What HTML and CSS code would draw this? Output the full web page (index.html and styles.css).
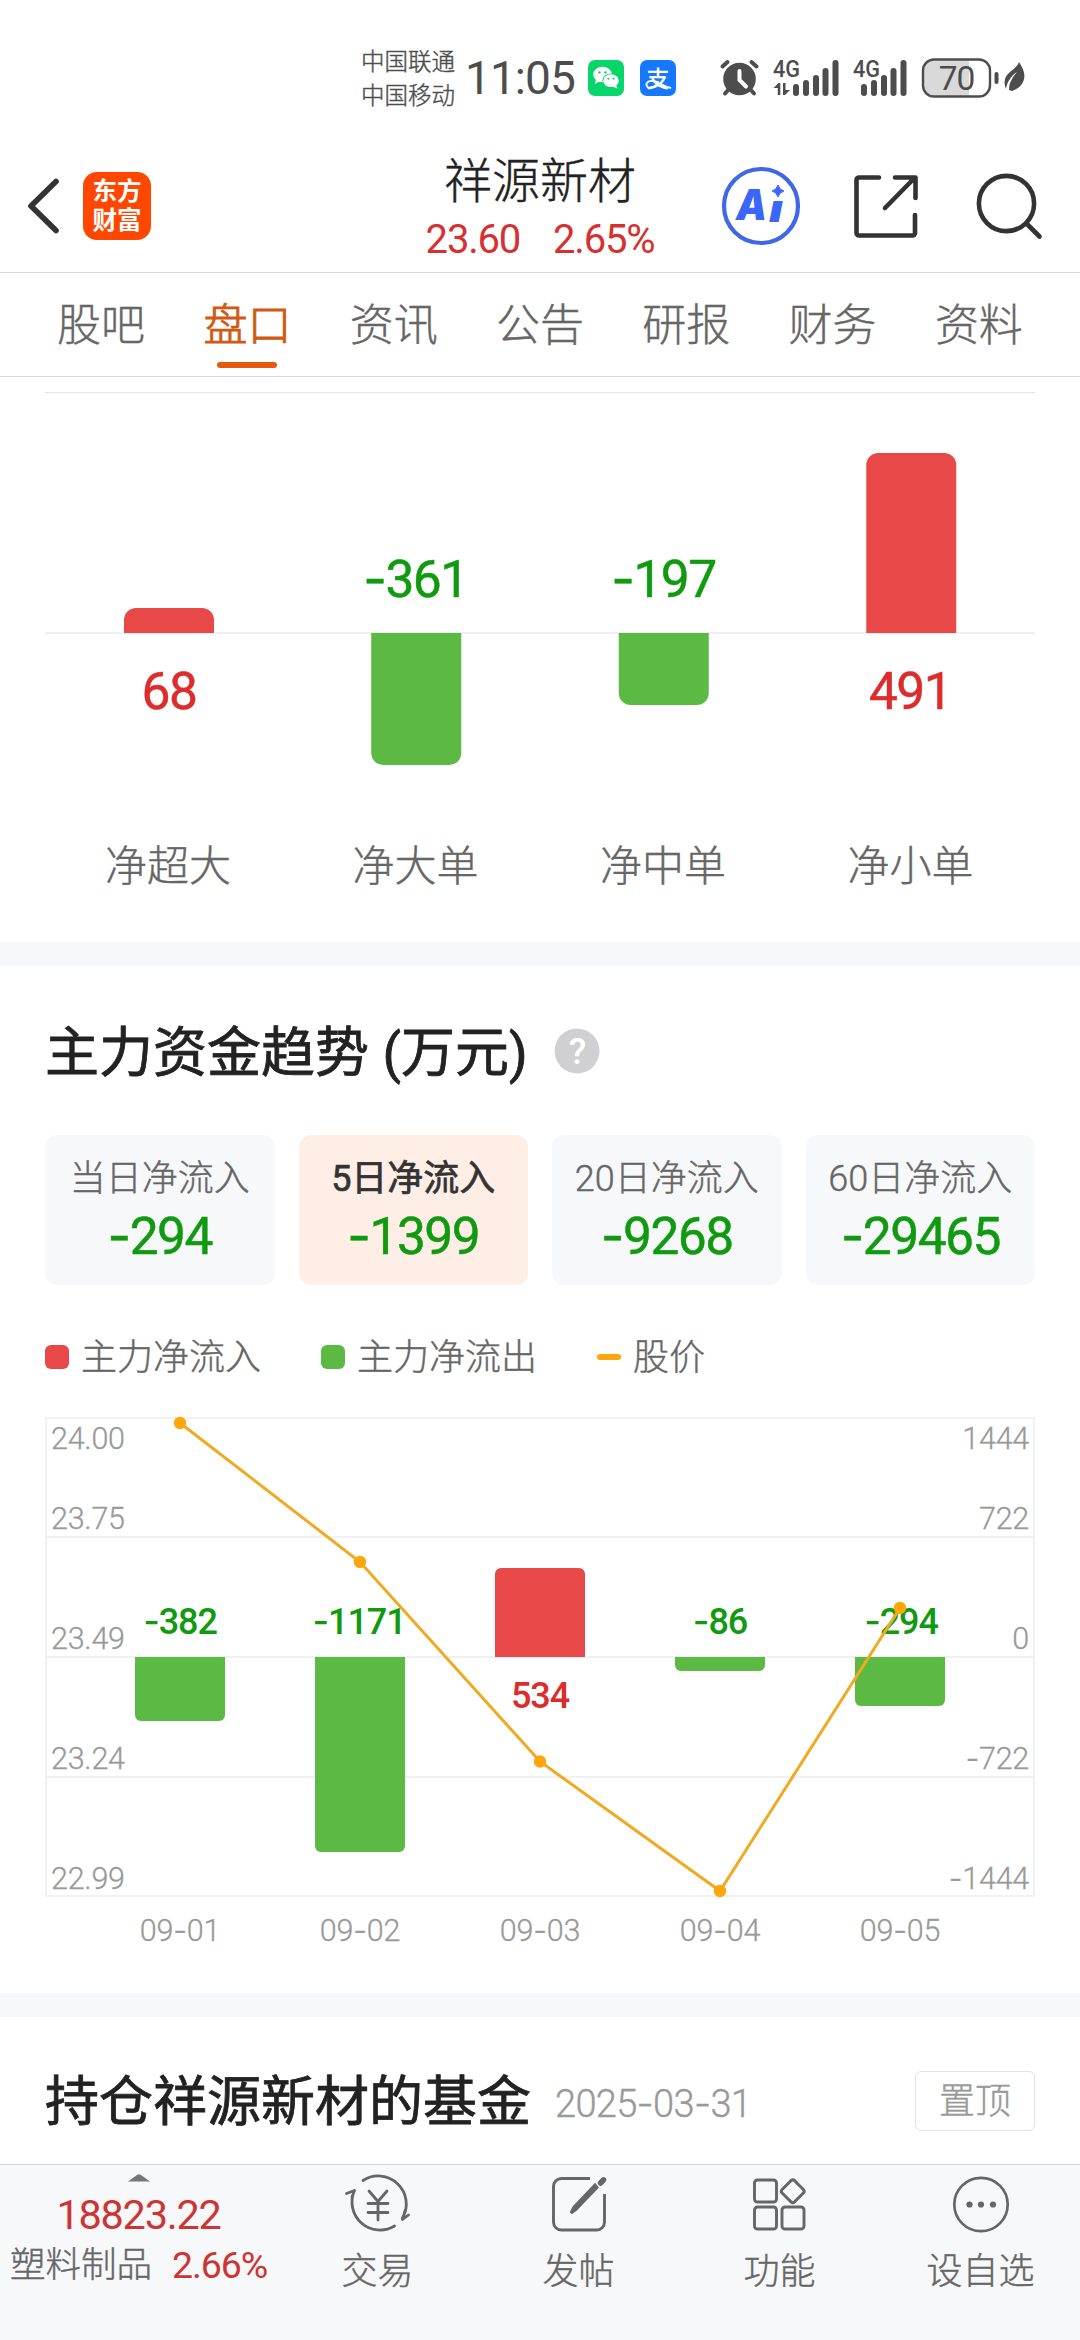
FILE: index.html
```html
<!DOCTYPE html>
<html lang="zh-CN">
<head>
<meta charset="utf-8">
<title>祥源新材</title>
<link rel="stylesheet" href="styles.css">
</head>
<body>
<div class="screen">
  <div class="status">
    <div class="carriers"><span>中国联通</span><span>中国移动</span></div>
    <div class="clock">11:05</div>
    <svg class="app" width="36" height="36" viewBox="0 0 36 36">
      <rect width="36" height="36" rx="7" fill="#06d66b"/>
      <ellipse cx="14.5" cy="14.5" rx="9.3" ry="7.8" fill="#fff"/><path d="M8 19l-1 5 5-3z" fill="#fff"/>
      <circle cx="11.4" cy="12.4" r="1.2" fill="#06d66b"/><circle cx="17.4" cy="12.4" r="1.2" fill="#06d66b"/>
      <ellipse cx="23" cy="20.7" rx="8.6" ry="7.2" fill="#06d66b"/><ellipse cx="23" cy="20.7" rx="7.8" ry="6.4" fill="#fff"/><path d="M28 25l1.500 3.500-5-2z" fill="#fff"/>
      <circle cx="20.400" cy="18.800" r="1" fill="#06d66b"/><circle cx="25.600" cy="18.800" r="1" fill="#06d66b"/>
    </svg>
    <svg class="app2" width="36" height="36" viewBox="0 0 36 36">
      <rect width="36" height="36" rx="7" fill="#1677ff"/>
      <text x="18" y="26.500" class="cjk" font-size="23" font-weight="500" fill="#fff" text-anchor="middle">支</text>
      <path d="M19 22.500c-6-2.500-13-2-12.500 2.500s8 3 12-2M21 24q5 3 10 4" fill="none" stroke="#fff" stroke-width="2"/>
    </svg>
    <svg class="sysicons" width="310" height="44" viewBox="0 0 310 44">
      <g fill="#4d4d4d" stroke="#4d4d4d" stroke-linecap="round">
        <circle cx="19.500" cy="23" r="16.300" stroke="none"/>
        <path d="M2.500 10.500L7.500 6M36.500 10.500L31.500 6M9 33l-4 4.500M30 33l4 4.500" stroke-width="4" fill="none"/>
        <path d="M19.500 15v9l6.500 6.500" stroke="#fff" stroke-width="4" fill="none"/>
      </g>
      <g class="net" fill="#4d4d4d">
        <text x="53" y="21" font-size="24" font-weight="500" textLength="27" lengthAdjust="spacingAndGlyphs">4G</text>
        <path d="M53.500 32l5-5h1.800v12h-2.500v-7zM63 27h2.500v7h4.500l-5 5H63z"/>
        <rect x="73" y="28" width="6" height="12" rx="3"/><rect x="83" y="24" width="6" height="16" rx="3"/><rect x="93" y="19" width="6" height="21" rx="3"/><rect x="102.500" y="12" width="6" height="28" rx="3"/><rect x="112.500" y="4" width="6" height="36" rx="3"/>
        <text x="133" y="21" font-size="24" font-weight="500" textLength="27" lengthAdjust="spacingAndGlyphs">4G</text>
        <rect x="141" y="28" width="6" height="12" rx="3"/><rect x="151" y="24" width="6" height="16" rx="3"/><rect x="161" y="19" width="6" height="21" rx="3"/><rect x="170.500" y="12" width="6" height="28" rx="3"/><rect x="180.500" y="4" width="6" height="36" rx="3"/>
      </g>
      <path d="M214 4h35v36h-35a10 10 0 0 1-10-10V14a10 10 0 0 1 10-10z" fill="#d9d9d9"/>
      <rect x="203" y="3.500" width="67" height="37" rx="11" fill="none" stroke="#4d4d4d" stroke-width="2.400"/>
      <text x="236.500" y="33.500" class="num" font-size="33.500" font-weight="400" fill="#4d4d4d" text-anchor="middle">70</text>
      <rect x="274.500" y="16" width="4" height="12" rx="2" fill="#4d4d4d"/>
      <path d="M299 6c5 8 7 13 4 20-2 4-5 7-11 9l-3-1c0-7 3-12 8-18-6 4-10 10-11 17-3-8-1-13 4-17 4-3 7-5 9-10z" fill="#4d4d4d"/>
    </svg>
  </div>

  <header class="header">
    <svg class="back" width="34" height="58" viewBox="0 0 34 58"><path d="M30 4.500L5 29l25 24.500" fill="none" stroke="#333" stroke-width="5.600" stroke-linecap="round" stroke-linejoin="round"/></svg>
    <div class="logo"><span>东方</span><span>财富</span></div>
    <div class="stock">
      <div class="name">祥源新材</div>
      <div class="quote"><span>23.60</span><span>2.65%</span></div>
    </div>
    <svg class="tools" width="330" height="80" viewBox="0 0 330 80">
      <circle cx="40" cy="40" r="37" fill="none" stroke="#4068e6" stroke-width="4.200"/>
      <g class="ai" fill="#3a66fa"><text x="15" y="54" font-size="43" textLength="31" lengthAdjust="spacingAndGlyphs">A</text><text x="48" y="56" font-size="39" textLength="14" lengthAdjust="spacingAndGlyphs">ı</text></g>
      <path d="M57 19q1.500 5 6 6-4.500 1-6 6-1.500-5-6-6 4.500-1 6-6z" fill="#3a66fa" stroke="#3a66fa"/>
      <g fill="none" stroke="#333" stroke-width="4.600" stroke-linecap="round" stroke-linejoin="round">
        <path d="M158 11.500h-20a2.500 2.500 0 0 0-2.500 2.500v53a2.500 2.500 0 0 0 2.500 2.500h53.500a2.500 2.500 0 0 0 2.500-2.500V49M174 11.500h20.500V32M193 12.500L164 42"/>
        <circle cx="285.500" cy="37.500" r="27.600"/><path d="M305.500 57.500l13 13"/>
      </g>
    </svg>
  </header>

  <nav class="tabs">
    <span>股吧</span><span class="on">盘口</span><span>资讯</span><span>公告</span><span>研报</span><span>财务</span><span>资料</span>
  </nav>

  <section class="orders">
    <svg width="1080" height="565" viewBox="0 377 1080 565">
      <path d="M45 392.500h990" stroke="#e4e4e4"/>
      <path d="M45 633h990" stroke="#f0f0f0" stroke-width="2"/>
      <path d="M124 633v-13a12 12 0 0 1 12-12h66a12 12 0 0 1 12 12v13z" fill="#e84948"/>
      <path d="M371.250 633v120a12 12 0 0 0 12 12h66a12 12 0 0 0 12-12V633z" fill="#5cb944"/>
      <path d="M618.750 633v60a12 12 0 0 0 12 12h66a12 12 0 0 0 12-12V633z" fill="#5cb944"/>
      <path d="M866.250 633V465a12 12 0 0 1 12-12h66a12 12 0 0 1 12 12v168z" fill="#e84948"/>
      <g class="big num" text-anchor="middle">
        <text x="169" y="708.500" class="up">68</text>
        <text x="415.500" y="596.500" class="down"><tspan class="m">-</tspan>361</text>
        <text x="663.500" y="596.500" class="down"><tspan class="m">-</tspan>197</text>
        <text x="910" y="708.500" class="up">491</text>
      </g>
      <g class="cat" text-anchor="middle">
        <text x="168" y="881">净超大</text><text x="415.500" y="881">净大单</text><text x="663" y="881">净中单</text><text x="910.500" y="881">净小单</text>
      </g>
    </svg>
  </section>

  <section class="trend">
    <h2>主力资金趋势 (万元)
      <svg width="46" height="46" viewBox="0 0 46 46"><circle cx="23" cy="23" r="22.500" fill="#d0d0d2"/><text x="23" y="36" class="num" font-size="36" font-weight="500" fill="#fff" text-anchor="middle">?</text></svg>
    </h2>
    <div class="cards">
      <div class="card"><span>当日净流入</span><b><i class="m">-</i>294</b></div>
      <div class="card on"><span>5日净流入</span><b><i class="m">-</i>1399</b></div>
      <div class="card"><span>20日净流入</span><b><i class="m">-</i>9268</b></div>
      <div class="card"><span>60日净流入</span><b><i class="m">-</i>29465</b></div>
    </div>
    <div class="legend">
      <span><i class="sq red"></i>主力净流入</span><span><i class="sq green"></i>主力净流出</span><span><i class="dash"></i>股价</span>
    </div>
    <svg class="plot" width="1080" height="583" viewBox="0 1410 1080 583">
      <g fill="none" stroke="#f1f1f1" stroke-width="2">
        <path d="M46 1418h988v478H46zM46 1537h988M46 1657h988M46 1777h988"/>
      </g>
      <g class="axis num">
        <text x="51" y="1449">24.00</text><text x="51" y="1529">23.75</text><text x="51" y="1649">23.49</text><text x="51" y="1769">23.24</text><text x="51" y="1889">22.99</text>
        <g text-anchor="end">
          <text x="1029" y="1449">1444</text><text x="1029" y="1529">722</text><text x="1029" y="1649">0</text><text x="1029" y="1769"><tspan class="m">-</tspan>722</text><text x="1029" y="1889"><tspan class="m">-</tspan>1444</text>
        </g>
        <g text-anchor="middle">
          <text x="180" y="1941">09<tspan class="m">-</tspan>01</text><text x="360" y="1941">09<tspan class="m">-</tspan>02</text><text x="540" y="1941">09<tspan class="m">-</tspan>03</text><text x="720" y="1941">09<tspan class="m">-</tspan>04</text><text x="900" y="1941">09<tspan class="m">-</tspan>05</text>
        </g>
      </g>
      <g fill="#5cb944">
        <path d="M135 1657v58a6 6 0 0 0 6 6h78a6 6 0 0 0 6-6v-58z"/>
        <path d="M315 1657v189a6 6 0 0 0 6 6h78a6 6 0 0 0 6-6v-189z"/>
        <path d="M675 1657v8a6 6 0 0 0 6 6h78a6 6 0 0 0 6-6v-8z"/>
        <path d="M855 1657v43a6 6 0 0 0 6 6h78a6 6 0 0 0 6-6v-43z"/>
      </g>
      <path d="M495 1657v-83a6 6 0 0 1 6-6h78a6 6 0 0 1 6 6v83z" fill="#e84948"/>
      <g class="vals num" text-anchor="middle">
        <text x="180" y="1633.500" class="down"><tspan class="m">-</tspan>382</text>
        <text x="359" y="1633.500" class="down"><tspan class="m">-</tspan>1171</text>
        <text x="540" y="1708" class="up">534</text>
        <text x="720" y="1633.500" class="down"><tspan class="m">-</tspan>86</text>
        <text x="901" y="1633.500" class="down"><tspan class="m">-</tspan>294</text>
      </g>
      <path d="M180 1423L360 1562L540 1761.500L720 1891L900 1608" fill="none" stroke="#f0aa22" stroke-width="3"/>
      <g fill="#ffa60a"><circle cx="180" cy="1423" r="6.200"/><circle cx="360" cy="1562" r="6.200"/><circle cx="540" cy="1761.500" r="6.200"/><circle cx="720" cy="1891" r="6.200"/><circle cx="900" cy="1608" r="6.200"/></g>
    </svg>
  </section>

  <section class="funds">
    <h2>持仓祥源新材的基金</h2>
    <span class="date">2025<i class="m">-</i>03<i class="m">-</i>31</span>
    <span class="pin">置顶</span>
  </section>

  <footer class="bar">
    <div class="index">
      <svg width="22" height="8" viewBox="0 0 22 8"><path d="M0 7.500L9 1q2-1.500 4 0l9 6.500z" fill="#75777b"/></svg>
      <div class="idx">18823.22</div>
      <div class="sector"><span>塑料制品</span><em>2.66%</em></div>
    </div>
    <div class="item">
      <svg width="66" height="60" viewBox="0 0 66 60" fill="none" stroke="#666" stroke-width="2.800" stroke-linecap="round" stroke-linejoin="round">
        <path d="M18 6.500A28 28 0 0 1 57.500 44l0 1M57.500 45.500l6-4.500M57.500 45.500l2.500-9M49.500 52A28 28 0 0 1 9.500 16.500L1.500 19.500M9.500 16.500L7 23"/>
        <path d="M24 17l9 10.500L42 17M33 27.500V46M23 29.500h20M23 38.500h20"/>
      </svg><span>交易</span>
    </div>
    <div class="item">
      <svg width="60" height="60" viewBox="0 0 60 60" fill="none" stroke="#666" stroke-width="2.900">
        <path d="M41 4.500H12.500a8 8 0 0 0-8 8v35.500a8 8 0 0 0 8 8H47.500a8 8 0 0 0 8-8V20"/>
        <path d="M48 13.500L27 35.500l-5 3.500 3-6L46 11z" fill="#666"/><path d="M51.500 9l3-3.200" stroke-width="5.500" stroke-linecap="round"/>
      </svg><span>发帖</span>
    </div>
    <div class="item">
      <svg width="60" height="60" viewBox="0 0 60 60" fill="none" stroke="#666" stroke-width="2.900">
        <rect x="4.500" y="6" width="22" height="22" rx="3"/><rect x="4.500" y="33" width="22" height="22" rx="3"/><rect x="32" y="33" width="22" height="22" rx="3"/>
        <rect x="34" y="8.500" width="17.500" height="17.500" rx="2.500" transform="rotate(45 42.750 17.250)"/>
      </svg><span>功能</span>
    </div>
    <div class="item">
      <svg width="60" height="60" viewBox="0 0 60 60"><circle cx="30" cy="30.500" r="26.700" fill="none" stroke="#666" stroke-width="2.700"/><g fill="#666"><circle cx="18.500" cy="30.500" r="3.100"/><circle cx="30" cy="30.500" r="3.100"/><circle cx="42" cy="30.500" r="3.100"/></g></svg><span>设自选</span>
    </div>
  </footer>
</div>
</body>
</html>
```
FILE: styles.css
```css
* { box-sizing: border-box; }
body { margin: 0; background: #fff; font-family: Roboto, "Noto Sans CJK SC", sans-serif; font-weight: 300; }
svg { display: block; flex: none; overflow: visible; }
i, em { font-style: normal; }
.screen { width: 1080px; height: 2340px; overflow: hidden; display: flex; flex-direction: column; background: #fff; }
.num, .quote, .card b, .idx, .sector em { letter-spacing: -0.03em; }
.m { font-family: Inter, sans-serif; }
.cjk { font-family: "Noto Sans CJK SC", sans-serif; }
.up { fill: #dd2c2c; }
.down { fill: #109a10; }

.status { height: 140px; display: flex; align-items: center; padding: 16px 0 0 361px; color: #4d4d4d; flex: none; }
.carriers { display: flex; flex-direction: column; width: 104px; font-size: 23.500px; line-height: 34px; padding-top: 1px; }
.clock { width: 123px; font-size: 46px; font-weight: 400; line-height: 56px; letter-spacing: -0.02em; }
.carriers, .name, .tabs, .card span, .legend, .pin, .sector span, .item, .date { -webkit-text-stroke: 0.4px currentColor; }
.app2 { margin-left: 16px; }
.sysicons { margin-left: 44px; }
.ai { font-family: Inter, sans-serif; font-weight: 900; font-style: italic; }

.header { height: 133px; flex: none; display: flex; align-items: center; border-bottom: 1px solid #d9d9d9; padding-left: 26px; }
.back { margin-right: 23px; }
.logo { width: 68px; height: 68px; border-radius: 14px; background: #ff4700; color: #fff; display: flex; flex-direction: column; align-items: center; justify-content: center; font-size: 24.500px; line-height: 29px; font-weight: 700; }
.stock { width: 400px; margin-left: 189px; text-align: center; height: 132px; }
.name { font-size: 48px; line-height: 56px; padding-top: 14px; color: #222; }
.quote { display: flex; justify-content: center; gap: 33px; color: #d63031; font-size: 40px; line-height: 46px; padding-top: 7px; font-weight: 400; }
.tools { margin-left: -19px; }

.tabs { height: 104px; flex: none; display: grid; grid-template-columns: repeat(7, 146.300px); justify-content: center; border-bottom: 1px solid #d9d9d9; font-size: 44px; line-height: 107px; color: #666; }
.tabs span { display: flex; flex-direction: column; align-items: center; }
.tabs .on { color: #d05a14; -webkit-text-stroke: 0.9px currentColor; }
.tabs .on::after { content: ""; width: 60px; height: 6px; border-radius: 3px; background: #e65a0f; margin-top: -18px; }

.orders { flex: none; border-bottom: 24px solid #f7f8fa; }
.big { font-size: 51.500px; font-weight: 400; stroke-width: 0.5px; }
.big .up { stroke: #dd2c2c; }
.big .down { stroke: #109a10; }
.cat { font-size: 42px; fill: #666; stroke: #666; stroke-width: 0.4px; }

.trend { flex: none; border-bottom: 24px solid #f7f8fa; height: 1051px; }
h2 { margin: 0; font-size: 54px; line-height: 80px; font-weight: 400; color: #222; -webkit-text-stroke: 0.8px currentColor; }
.trend h2 { display: flex; align-items: center; gap: 26px; padding: 48px 0 0 45px; }
.trend h2 svg { margin-top: -6px; -webkit-text-stroke: 0; }
.cards { display: grid; grid-template-columns: repeat(4, 1fr); gap: 24px; padding: 41px 45px 0; }
.card { height: 150px; border-radius: 12px; background: #f7f8fa; display: flex; flex-direction: column; align-items: center; color: #666; font-size: 36px; line-height: 50px; padding-top: 19px; }
.card.on { background: #ffeee6; }
.card.on span { color: #333; font-weight: 400; -webkit-text-stroke: 0.7px currentColor; }
.card b { font-size: 51.500px; line-height: 62px; font-weight: 400; color: #109a10; -webkit-text-stroke: 0.5px currentColor; }
.legend { display: flex; padding: 47px 0 0 45px; height: 125px; font-size: 36px; line-height: 50px; color: #666; }
.legend span { display: flex; align-items: center; height: 50px; margin-right: 60px; padding-top: 2px; }
.sq { width: 24px; height: 24px; border-radius: 6px; margin: -2px 12px 0 0; }
.red { background: #e84948; }
.green { background: #5cb944; }
.dash { width: 24px; height: 6px; border-radius: 3px; background: #ffa60a; margin: -2px 12px 0 0; }
.axis { font-size: 30.500px; fill: #999; stroke: #999; stroke-width: 0.3px; letter-spacing: -0.008em; }
.vals { font-size: 36px; font-weight: 500; }

.funds { height: 147px; flex: none; display: flex; align-items: center; padding: 25px 45px 0; }
.funds .date { margin-left: 24px; font-size: 38px; color: #999; line-height: 50px; letter-spacing: -0.018em; }
.pin { margin: -4px 0 0 auto; width: 120px; height: 60px; border: 1px solid #e2e2e2; border-radius: 6px; text-align: center; font-size: 36px; line-height: 60px; color: #999; }

.bar { height: 176px; flex: none; border-top: 1px solid #d0d5d9; background: #f7f8fa; display: grid; grid-template-columns: 277px repeat(4, 201px); color: #666; }
.index { display: flex; flex-direction: column; align-items: center; padding-top: 9px; }
.idx { font-size: 41.500px; line-height: 50px; color: #cf3434; font-weight: 400; padding-top: 8px; }
.sector { display: flex; gap: 20px; font-size: 35.500px; line-height: 50px; white-space: nowrap; }
.sector em { font-size: 37.500px; color: #cf3434; font-weight: 400; }
.item { display: flex; flex-direction: column; align-items: center; padding-top: 9px; font-size: 36px; line-height: 50px; }
.item span { margin-top: 13px; }
```
